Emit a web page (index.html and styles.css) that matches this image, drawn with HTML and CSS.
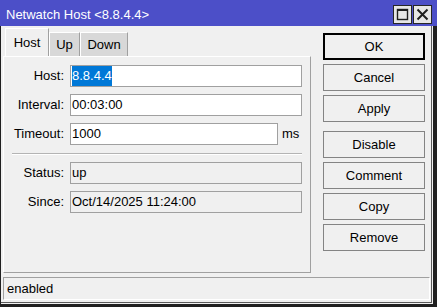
FILE: index.html
```html
<!DOCTYPE html>
<html>
<head>
<meta charset="utf-8">
<link rel="stylesheet" href="styles.css">
</head>
<body>
<div class="window">
  <div class="titlebar">
    <span class="title">Netwatch Host &lt;8.8.4.4&gt;</span>
    <div class="tb-btns">
      <div class="tb-btn">
        <svg width="17" height="17" viewBox="0 0 17 17"><rect x="3.5" y="3.5" width="10" height="10" fill="none" stroke="#1e1e1e" stroke-width="1.4"/><line x1="3" y1="4" x2="14" y2="4" stroke="#1e1e1e" stroke-width="2"/></svg>
      </div>
      <div class="tb-btn">
        <svg width="17" height="17" viewBox="0 0 17 17"><path d="M3.5 3.5 L13.5 13.5 M13.5 3.5 L3.5 13.5" stroke="#1e1e1e" stroke-width="2" fill="none"/></svg>
      </div>
    </div>
  </div>
  <div class="frame">
    <div class="inner">
      <div class="main">
        <div class="tabpane">
          <div class="tabs">
            <div class="tab active w-host">Host</div>
            <div class="tab w-up">Up</div>
            <div class="tab w-down">Down</div>
          </div>
          <div class="panel">
            <div class="row">
              <div class="label">Host:</div>
              <div class="field"><span class="sel">8.8.4.4</span></div>
            </div>
            <div class="row">
              <div class="label">Interval:</div>
              <div class="field">00:03:00</div>
            </div>
            <div class="row">
              <div class="label">Timeout:</div>
              <div class="field-wrap">
                <div class="field">1000</div>
                <span class="unit">ms</span>
              </div>
            </div>
            <div class="separator"></div>
            <div class="row">
              <div class="label">Status:</div>
              <div class="field ro">up</div>
            </div>
            <div class="row">
              <div class="label">Since:</div>
              <div class="field ro">Oct/14/2025 11:24:00</div>
            </div>
          </div>
        </div>
        <div class="buttons">
          <div class="btn default">OK</div>
          <div class="btn">Cancel</div>
          <div class="btn">Apply</div>
          <div class="btn spaced">Disable</div>
          <div class="btn">Comment</div>
          <div class="btn">Copy</div>
          <div class="btn">Remove</div>
        </div>
      </div>
      <div class="statusbar">enabled</div>
    </div>
  </div>
</div>
</body>
</html>
```
FILE: styles.css
```css
* { box-sizing: border-box; }
html, body { margin: 0; padding: 0; }
body {
  width: 437px;
  height: 307px;
  overflow: hidden;
  font-family: "Liberation Sans", Arial, sans-serif;
  font-size: 13px;
  color: #000;
  background: #f0f0f0;
}
.window {
  width: 437px;
  height: 307px;
  display: flex;
  flex-direction: column;
}
.titlebar {
  height: 26px;
  flex: none;
  background: #4c4fc8;
  display: flex;
  align-items: flex-start;
  justify-content: space-between;
  padding: 0 5px 0 6px;
}
.title {
  color: #fff;
  line-height: 15px;
  margin-top: 7px;
}
.tb-btns {
  display: flex;
  gap: 1px;
  margin-top: 5px;
}
.tb-btn {
  width: 19px;
  height: 19px;
  border: 1px solid #262626;
  background: #e6e6e6;
  display: flex;
}
.tb-btn svg { display: block; }
.frame {
  flex: 1;
  display: flex;
  border-left: 1px solid #202020;
  border-right: 4px solid #202020;
  border-bottom: 3px solid #202020;
  background: #f0f0f0;
}
.inner {
  flex: 1;
  margin: 0 1px 1px 0;
  border-right: 1px solid #5a5a5a;
  border-bottom: 1px solid #5a5a5a;
  display: flex;
  flex-direction: column;
}
.main {
  flex: 1;
  display: flex;
}
.tabpane {
  width: 308px;
  margin: 0 0 4px 2px;
  display: flex;
  flex-direction: column;
}
.tabs {
  height: 30px;
  display: flex;
  align-items: flex-end;
  padding-left: 2px;
}
.tab {
  height: 24px;
  background: #d8d8d8;
  border-top: 1px solid #fff;
  border-left: 1px solid #fff;
  border-right: 1px solid #a0a0a0;
  text-align: center;
  line-height: 15px;
  padding-top: 4px;
}
.tab.active {
  height: 28px;
  background: #f0f0f0;
  padding-top: 6px;
}
.w-host { width: 44px; }
.w-up { width: 31px; }
.w-down { width: 48px; }
.panel {
  flex: 1;
  border-top: 1px solid #fff;
  border-left: 1px solid #fff;
  border-right: 1px solid #a0a0a0;
  border-bottom: 1px solid #a0a0a0;
  padding: 8px 8px 0 0;
  display: flex;
  flex-direction: column;
  gap: 7px;
}
.row {
  display: flex;
  gap: 6px;
  height: 22px;
}
.label {
  width: 60px;
  text-align: right;
  line-height: 22px;
}
.field {
  flex: 1;
  height: 22px;
  border: 1px solid #a0a0a0;
  background: #fff;
  padding-left: 1px;
  line-height: 20px;
  white-space: nowrap;
}
.field.ro { background: #f0f0f0; }
.field-wrap {
  flex: 1;
  display: flex;
}
.unit {
  width: 24px;
  padding-left: 4px;
  line-height: 22px;
}
.sel {
  background: #0078d7;
  color: #fff;
  display: inline-block;
  line-height: 20px;
  vertical-align: top;
}
.separator {
  height: 2px;
  margin: 1px 0 0 8px;
  border-top: 1px solid #b4b4b4;
  border-bottom: 1px solid #fff;
}
.buttons {
  width: 102px;
  margin: 7px 6px 0 12px;
  display: flex;
  flex-direction: column;
  gap: 4px;
}
.btn {
  height: 27px;
  border: 1px solid #848484;
  background: #f0f0f0;
  text-align: center;
  line-height: 25px;
}
.btn.default {
  border: 2px solid #000;
  line-height: 23px;
}
.btn.spaced { margin-top: 5px; }
.statusbar {
  height: 23px;
  flex: none;
  margin: 0 1px 2px 2px;
  border-top: 1px solid #a0a0a0;
  border-left: 1px solid #a0a0a0;
  border-right: 1px solid #fff;
  border-bottom: 1px solid #fff;
  padding-left: 3px;
  line-height: 21px;
}
```
